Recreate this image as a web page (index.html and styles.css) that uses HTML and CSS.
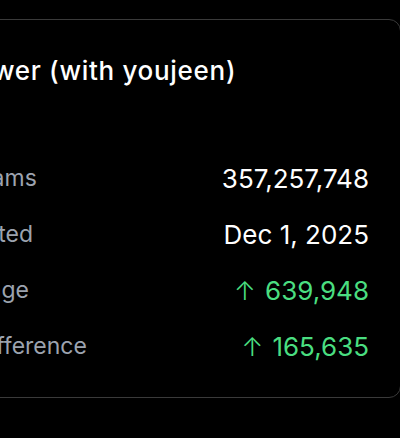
FILE: index.html
```html
<!DOCTYPE html>
<html lang="en">
<head>
<meta charset="utf-8">
<title>Song stats</title>
<link rel="stylesheet" href="styles.css">
</head>
<body>
<div class="page">
  <section class="card">
    <h2 class="title">Wild Flower (with youjeen)</h2>
    <dl class="stats">
      <div class="row"><dt class="label">Total Streams</dt><dd class="value">357,257,748</dd></div>
      <div class="row"><dt class="label">Last Updated</dt><dd class="value">Dec 1, 2025</dd></div>
      <div class="row"><dt class="label">Daily change</dt><dd class="value up"><span class="arrow">↑</span> 639,948</dd></div>
      <div class="row"><dt class="label">Weekly Difference</dt><dd class="value up"><span class="arrow">↑</span> 165,635</dd></div>
    </dl>
  </section>
</div>
</body>
</html>
```
FILE: styles.css
```css
html, body {
  margin: 0;
  padding: 0;
  background: #000;
}
body {
  font-family: Inter, "Noto Sans", sans-serif;
  color: #fff;
  overflow: hidden;
}
.page {
  padding-top: 19px;
  width: 400px;
  height: 438px;
  box-sizing: border-box;
  overflow: hidden;
}
.card {
  box-sizing: border-box;
  width: 546px;
  height: 379px;
  margin-left: -145px;
  border: 1px solid #3a3a3a;
  border-radius: 12px;
  padding: 35px 31px 32px 32px;
  background: #000;
}
.title {
  margin: 0;
  font-size: 26px;
  line-height: 32px;
  font-weight: 500;
  letter-spacing: 0.7px;
  white-space: nowrap;
}
.stats {
  margin: 75px 0 0 0;
  display: flex;
  flex-direction: column;
  gap: 24px;
}
.row {
  display: flex;
  justify-content: space-between;
  align-items: center;
  height: 32px;
}
.label {
  font-size: 23px;
  color: #9ca3af;
}
.value {
  margin: 0;
  font-size: 26px;
  color: #fff;
}
.value.up {
  color: #4ade80;
}
.arrow {
  font-weight: 300;
  margin-right: 2px;
}
```
